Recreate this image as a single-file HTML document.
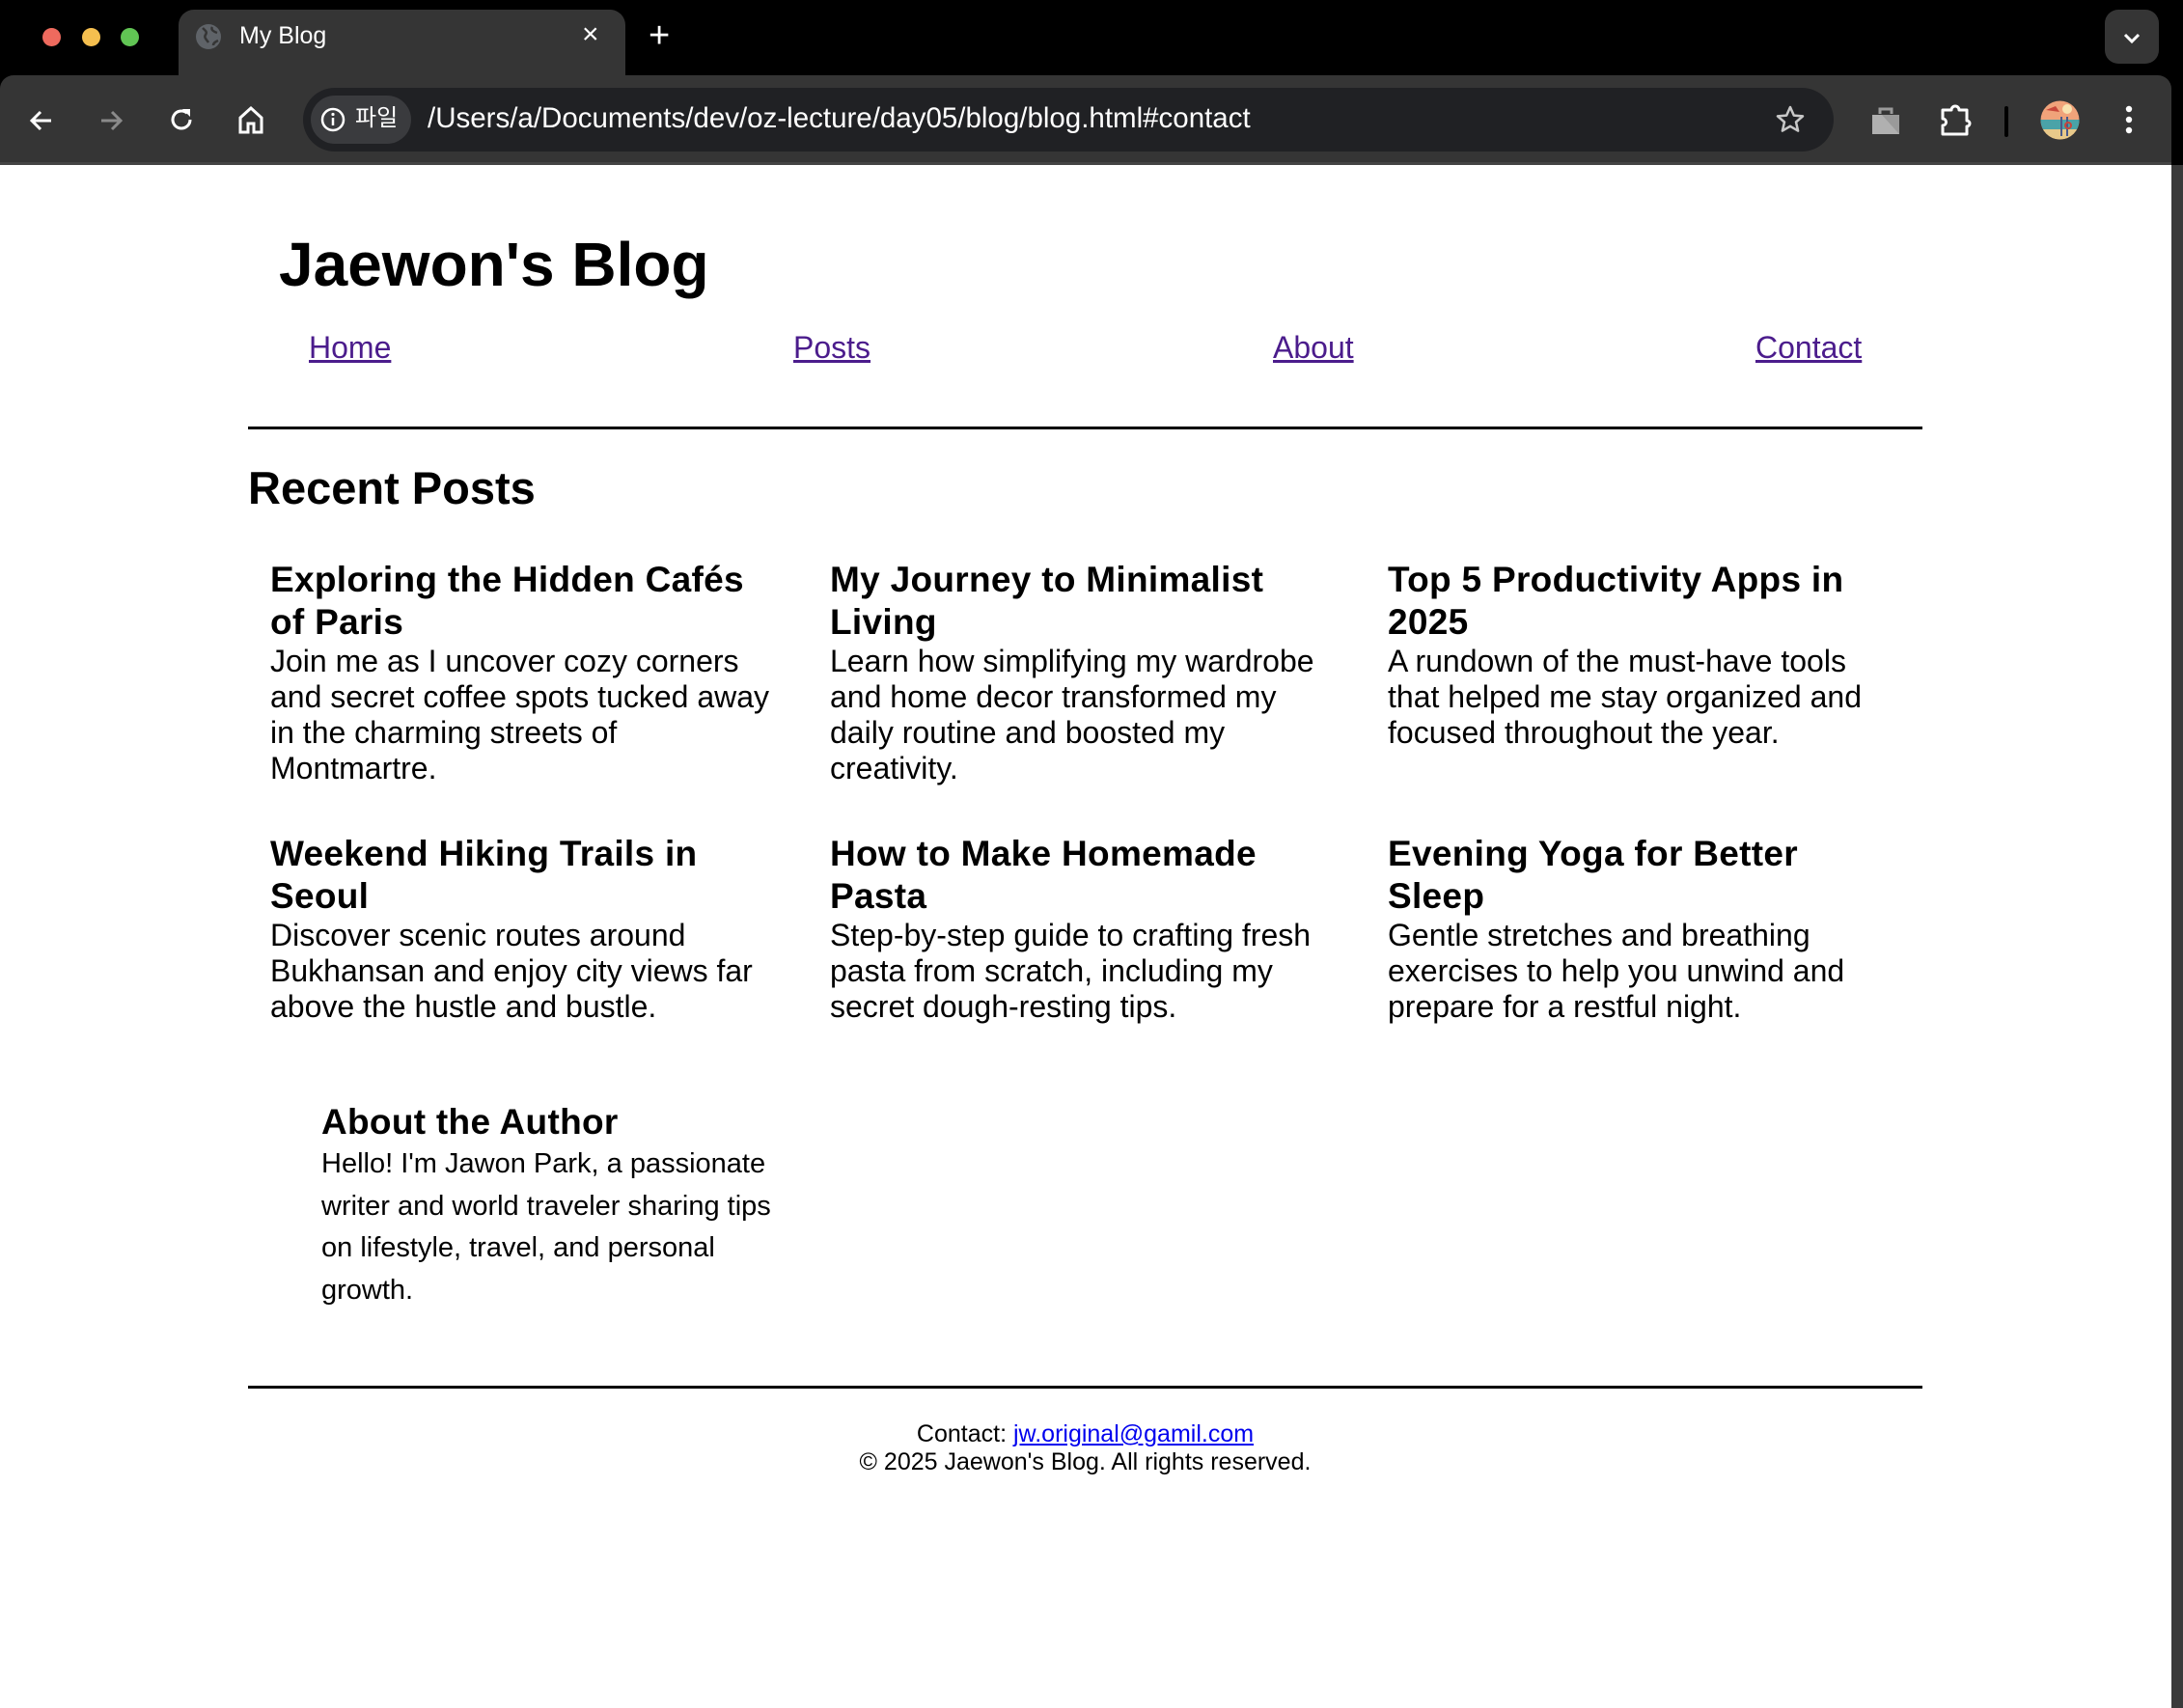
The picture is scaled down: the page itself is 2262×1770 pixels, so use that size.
<!DOCTYPE html>
<html><head><meta charset="utf-8">
<style>
*{margin:0;padding:0;box-sizing:border-box}
html,body{width:2262px;height:1770px;overflow:hidden;background:#fff;font-family:"Liberation Sans",Arial,sans-serif;color:#000}
.abs{position:absolute;white-space:nowrap}
.top{position:absolute;left:0;top:0;width:2262px;height:171px;background:#000}
.toolbar{position:absolute;left:0;top:78px;width:2250px;height:93px;background:#353535;border-radius:14px 14px 0 0}
.tab{position:absolute;left:185px;top:10px;width:463px;height:75px;background:#353535;border-radius:16px 16px 0 0}
.dot{position:absolute;top:29px;width:19px;height:19px;border-radius:50%}
.url{position:absolute;left:314px;top:91px;width:1586px;height:66px;background:#202124;border-radius:33px}
.chip{position:absolute;left:322px;top:99px;width:104px;height:50px;background:#3a3b3e;border-radius:25px}
.w{color:#fff}
.h3{font-size:37px;font-weight:bold;line-height:44px;letter-spacing:0.3px}
.p{font-size:32px;line-height:37px}
.nav{font-size:32px;line-height:37px;color:#4b1c8c;text-decoration:underline}
.hr{position:absolute;left:257px;width:1735px;height:3px;background:#000}
</style></head><body>
<div class="top"></div>
<div class="tab"></div>
<div class="toolbar"></div>
<div class="dot" style="left:44px;background:#ee6a5e"></div>
<div class="dot" style="left:85px;background:#f5bf4f"></div>
<div class="dot" style="left:125px;background:#61c554"></div>
<svg class="abs" style="left:201px;top:23px" width="30" height="30" viewBox="0 0 30 30"><circle cx="15" cy="15" r="13" fill="#5f6368"/><path d="M9 6c3 3 5 4 3 7s1 5 3 8M19 5c-2 3 2 5 5 6M20 24c0-3 3-4 5-5" stroke="#353535" stroke-width="2.5" fill="none"/></svg>
<div class="abs w" style="left:248px;top:22px;font-size:25px;line-height:30px">My Blog</div>
<div class="abs w" style="left:603px;top:18px;font-size:30px;line-height:36px">×</div>
<div class="abs w" style="left:672px;top:16px;font-size:38px;line-height:42px">+</div>
<div class="abs" style="left:2181px;top:10px;width:56px;height:56px;background:#353535;border-radius:14px"></div>
<svg class="abs" style="left:2198px;top:28px" width="22" height="22" viewBox="0 0 22 22"><path d="M4 8l7 7 7-7" stroke="#fff" stroke-width="3" fill="none"/></svg>
<svg class="abs" style="left:28px;top:110px" width="30" height="30" viewBox="0 0 30 30"><path d="M25 15H6M14 6l-9 9 9 9" stroke="#fff" stroke-width="3" fill="none"/></svg>
<svg class="abs" style="left:100px;top:110px" width="30" height="30" viewBox="0 0 30 30"><path d="M5 15h19M16 6l9 9-9 9" stroke="#8a8a8a" stroke-width="3" fill="none"/></svg>
<svg class="abs" style="left:173px;top:109px" width="30" height="30" viewBox="0 0 30 30"><path d="M24 15a9 9 0 1 1-3-6.7" stroke="#fff" stroke-width="3" fill="none"/><path d="M16 4h8v8z" fill="#fff"/></svg>
<svg class="abs" style="left:245px;top:108px" width="30" height="32" viewBox="0 0 30 32"><path d="M4 14L15 4l11 10v15h-8v-9h-6v9H4z" stroke="#fff" stroke-width="3" fill="none"/></svg>
<div class="url"></div>
<div class="chip"></div>
<svg class="abs" style="left:332px;top:111px" width="26" height="26" viewBox="0 0 26 26"><circle cx="13" cy="13" r="11" stroke="#fff" stroke-width="2.5" fill="none"/><path d="M13 11v8" stroke="#fff" stroke-width="2.5"/><circle cx="13" cy="7.5" r="1.6" fill="#fff"/></svg>
<div class="abs w" style="left:368px;top:108px;font-family:'Liberation Sans','Noto Sans CJK KR',sans-serif;font-size:24px;line-height:30px">파일</div>
<div class="abs w" style="left:443px;top:106px;font-size:29.5px;line-height:34px">/Users/a/Documents/dev/oz-lecture/day05/blog/blog.html#contact</div>
<svg class="abs" style="left:1838px;top:107px" width="34" height="34" viewBox="0 0 34 34"><path d="M17 4l3.8 8.6 9.2.8-7 6.1 2.1 9.1L17 23.8l-8.1 4.8 2.1-9.1-7-6.1 9.2-.8z" stroke="#c8c8c8" stroke-width="2.5" fill="none" stroke-linejoin="round"/></svg>
<svg class="abs" style="left:1938px;top:109px" width="32" height="32" viewBox="0 0 32 32"><path d="M10 9V4h12v5" stroke="#9a9a9a" stroke-width="3" fill="none"/><rect x="2" y="10" width="28" height="20" fill="#9a9a9a"/><path d="M2 10h10l18 20H2z" fill="#b0b0b0"/></svg>
<svg class="abs" style="left:2010px;top:107px" width="34" height="36" viewBox="0 0 34 36"><path d="M3 7h9a4 4 0 0 1 8 0h8v11a3 3 0 0 1 0 6v8H3v-9a3 3 0 0 0 0-7z" stroke="#fff" stroke-width="3" fill="none" stroke-linejoin="round"/></svg>
<div class="abs" style="left:2077px;top:110px;width:4px;height:32px;background:#000;border-radius:2px"></div>
<svg class="abs" style="left:2114px;top:104px" width="41" height="41" viewBox="0 0 41 41"><defs><clipPath id="c"><circle cx="20.5" cy="20.5" r="20"/></clipPath></defs><g clip-path="url(#c)"><rect width="41" height="41" fill="#f0a37a"/><rect y="20" width="41" height="10" fill="#4aa3a8"/><rect y="30" width="41" height="11" fill="#e8c98a"/><circle cx="28" cy="9" r="5" fill="#f8e3b0"/><path d="M6 10l10-4 4 6z" fill="#c8473a"/><path d="M22 17v20M28 17v20" stroke="#4a5a8a" stroke-width="2"/><circle cx="29" cy="26" r="3" stroke="#c8473a" stroke-width="2" fill="none"/></g></svg>
<svg class="abs" style="left:2196px;top:108px" width="20" height="34" viewBox="0 0 20 34"><circle cx="10" cy="5" r="3.2" fill="#fff"/><circle cx="10" cy="16" r="3.2" fill="#fff"/><circle cx="10" cy="27" r="3.2" fill="#fff"/></svg>
<div class="abs" style="left:2250px;top:171px;width:12px;height:1599px;background:#3a3a3a"></div>
<div class="abs" style="left:0;top:168px;width:2250px;height:3px;background:#444"></div>

<div class="abs" style="left:289px;top:237px;font-size:64px;font-weight:bold;line-height:74px">Jaewon's Blog</div>
<div class="abs nav" style="left:320px;top:342px">Home</div>
<div class="abs nav" style="left:822px;top:342px">Posts</div>
<div class="abs nav" style="left:1319px;top:342px">About</div>
<div class="abs nav" style="left:1819px;top:342px">Contact</div>
<div class="hr" style="top:442px"></div>
<div class="abs" style="left:257px;top:479px;font-size:47px;font-weight:bold;line-height:53px">Recent Posts</div>

<div class="abs" style="left:280px;top:579px"><div class="h3">Exploring the Hidden Cafés<br>of Paris</div><div class="p">Join me as I uncover cozy corners<br>and secret coffee spots tucked away<br>in the charming streets of<br>Montmartre.</div></div>
<div class="abs" style="left:860px;top:579px"><div class="h3">My Journey to Minimalist<br>Living</div><div class="p">Learn how simplifying my wardrobe<br>and home decor transformed my<br>daily routine and boosted my<br>creativity.</div></div>
<div class="abs" style="left:1438px;top:579px"><div class="h3">Top 5 Productivity Apps in<br>2025</div><div class="p">A rundown of the must-have tools<br>that helped me stay organized and<br>focused throughout the year.</div></div>

<div class="abs" style="left:280px;top:863px"><div class="h3">Weekend Hiking Trails in<br>Seoul</div><div class="p">Discover scenic routes around<br>Bukhansan and enjoy city views far<br>above the hustle and bustle.</div></div>
<div class="abs" style="left:860px;top:863px"><div class="h3">How to Make Homemade<br>Pasta</div><div class="p">Step-by-step guide to crafting fresh<br>pasta from scratch, including my<br>secret dough-resting tips.</div></div>
<div class="abs" style="left:1438px;top:863px"><div class="h3">Evening Yoga for Better<br>Sleep</div><div class="p">Gentle stretches and breathing<br>exercises to help you unwind and<br>prepare for a restful night.</div></div>

<div class="abs h3" style="left:333px;top:1141px">About the Author</div>
<div class="abs" style="left:333px;top:1185px;font-size:29px;line-height:43.5px">Hello! I'm Jawon Park, a passionate<br>writer and world traveler sharing tips<br>on lifestyle, travel, and personal<br>growth.</div>

<div class="hr" style="top:1436px"></div>
<div class="abs" style="left:257px;width:1735px;top:1472px;text-align:center;font-size:25px;line-height:29px">Contact: <span style="color:#0000ee;text-decoration:underline">jw.original@gamil.com</span><br>© 2025 Jaewon's Blog. All rights reserved.</div>
</body></html>
